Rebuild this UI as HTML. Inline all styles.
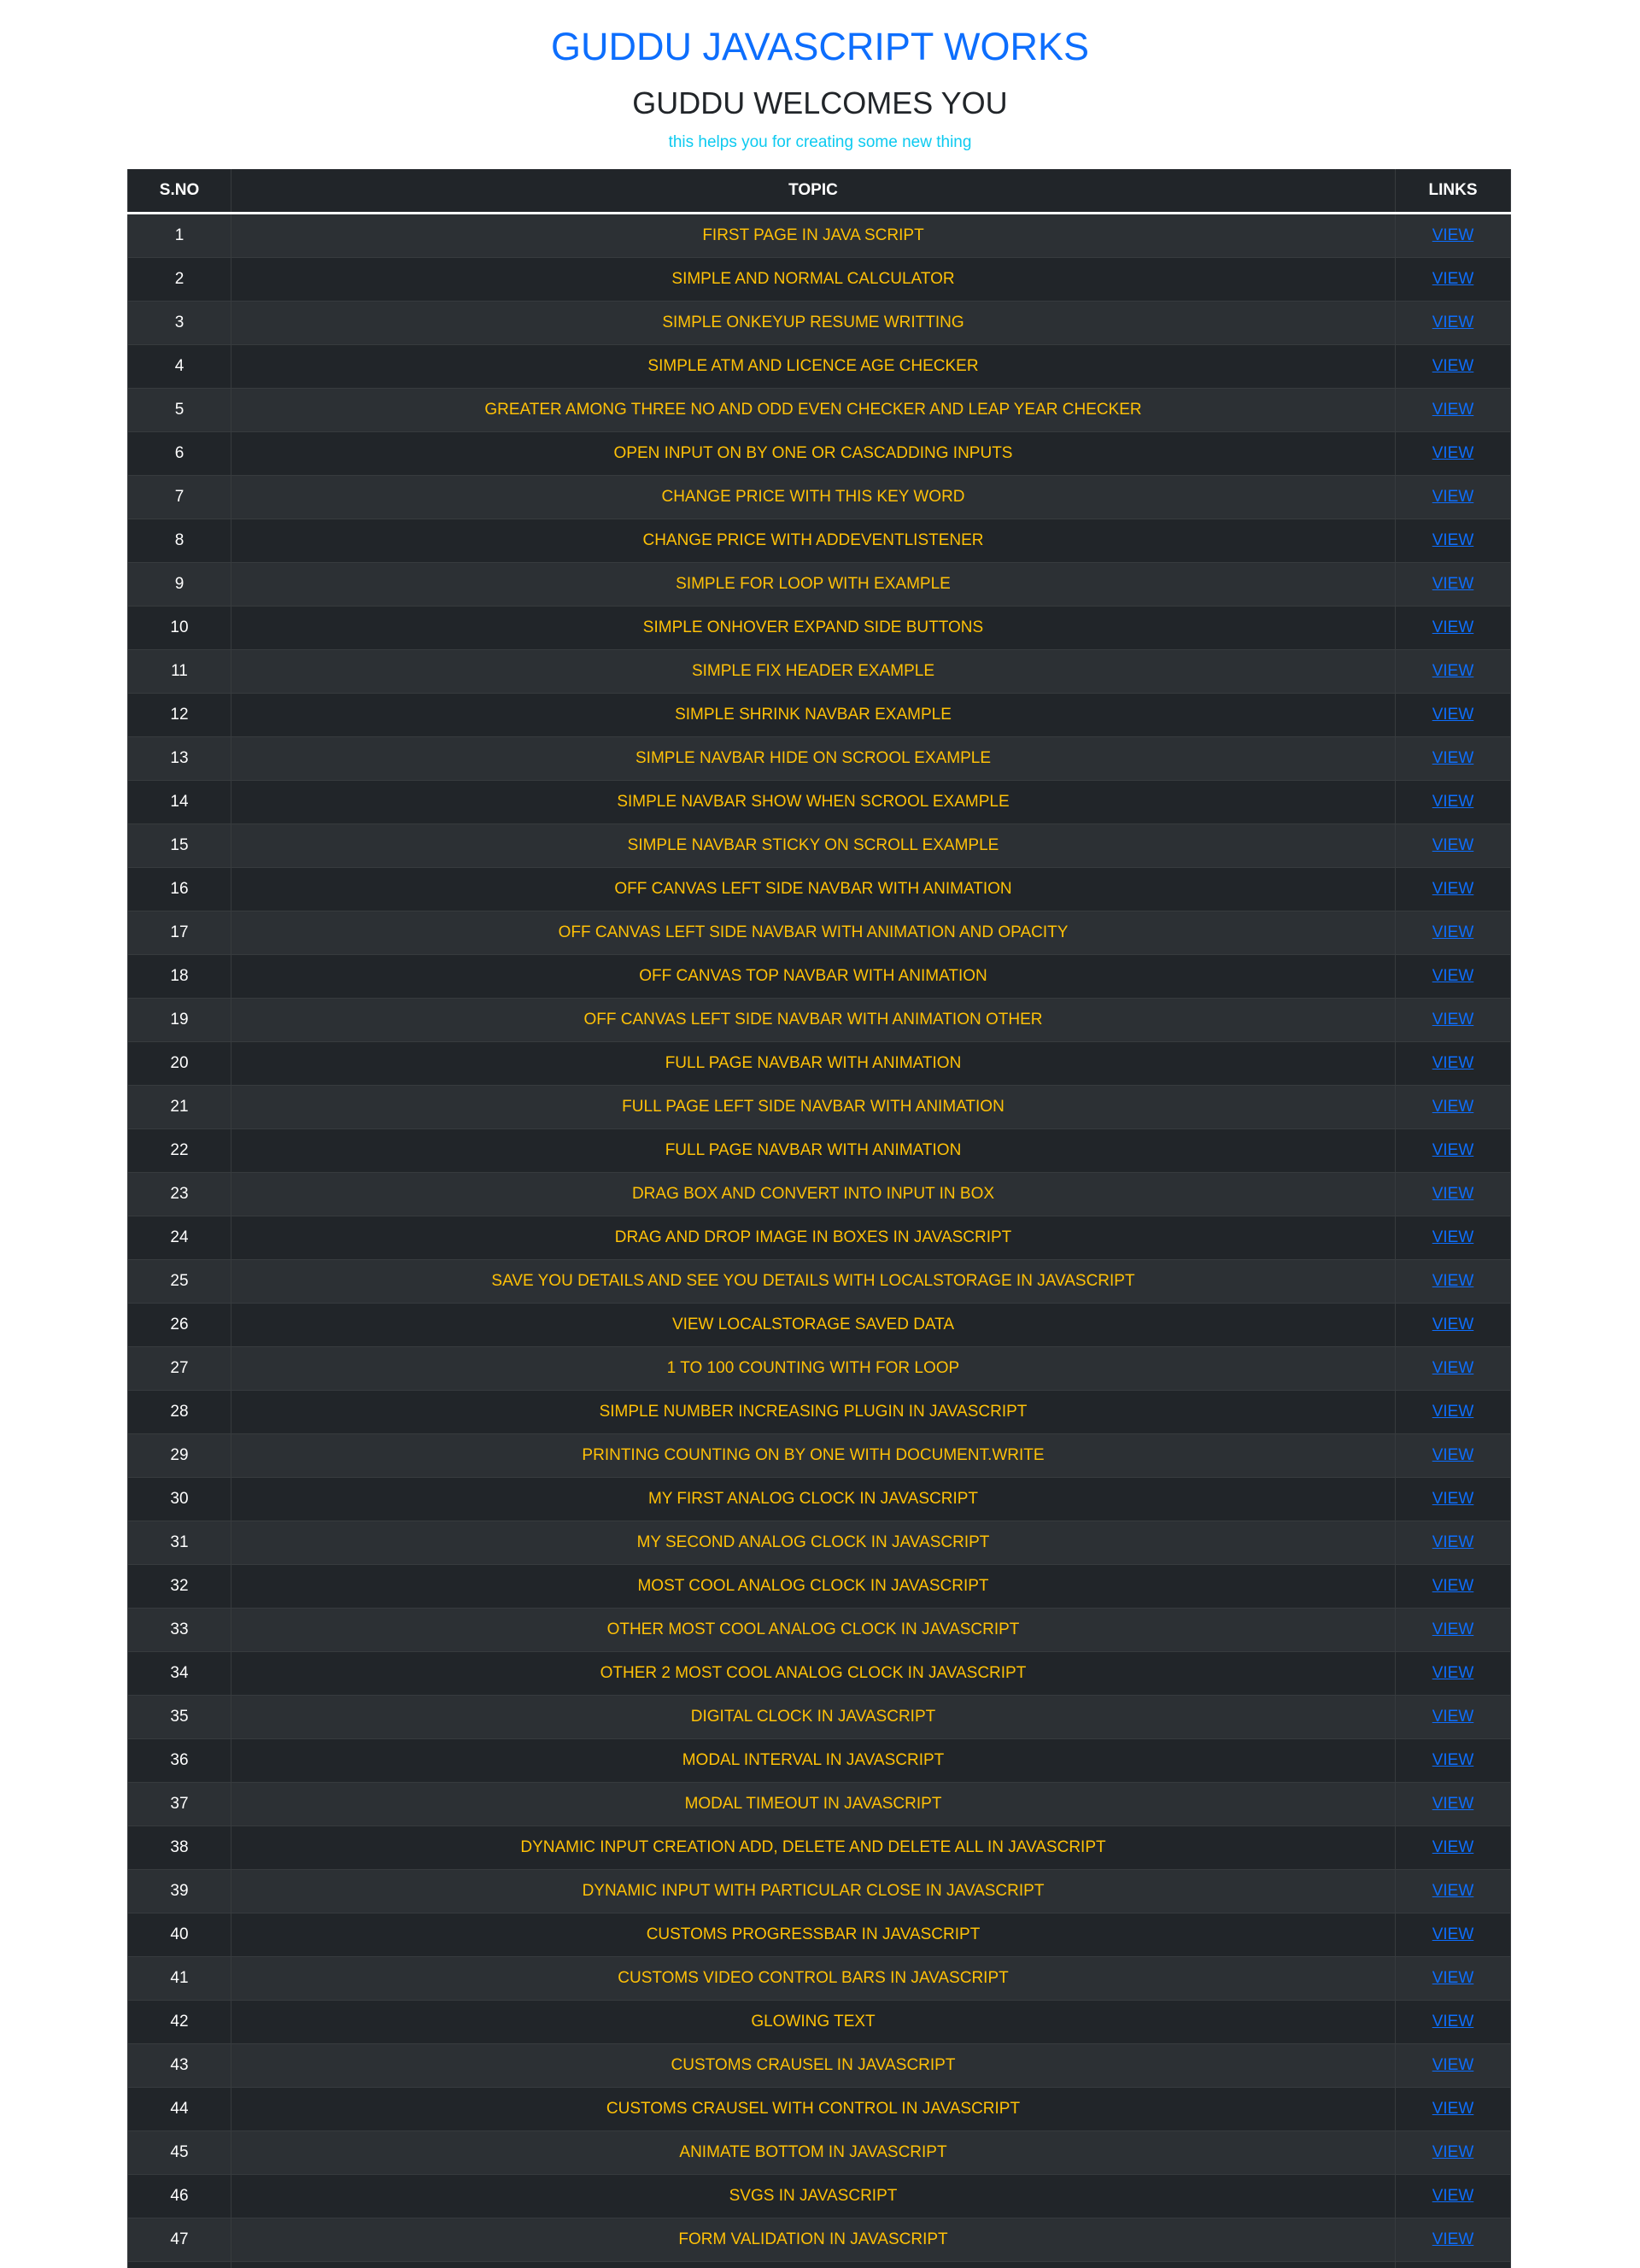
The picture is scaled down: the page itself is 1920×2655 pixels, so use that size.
<!DOCTYPE html>
<html><head><meta charset="utf-8">
<style>
html,body{margin:0;padding:0;background:#fff;width:1920px;height:2655px;overflow:hidden;font-family:"Liberation Sans",sans-serif;}
#wrap{position:relative;width:1920px;height:2655px;overflow:hidden;}
.h1{position:absolute;left:0;width:1920px;top:25px;text-align:center;color:#0d6efd;font-size:45px;line-height:60px;}
.h2{position:absolute;left:0;width:1920px;top:98px;text-align:center;color:#212529;font-size:36px;line-height:46px;}
.sub{position:absolute;left:0;width:1920px;top:155px;text-align:center;color:#0dcaf0;font-size:19px;line-height:24px;}
.t{position:absolute;left:149px;top:198px;width:1620px;font-size:19px;}
.r{display:flex;height:50px;border-bottom:1px solid #373b3e;line-height:50px;text-align:center;}
.r>div{box-sizing:border-box;}
.c1{width:121px;border-left:1px solid #373b3e;color:#fff;}
.c2{width:1363px;border-left:1px solid #373b3e;color:#ffc107;}
.c3{width:136px;border-left:1px solid #373b3e;border-right:1px solid #373b3e;}
.hd{background:#212529;color:#fff;font-weight:bold;border-bottom:3px solid #fff;height:50px;}
.hd .c2{color:#fff;}
.r:nth-child(even){background:#2c3034;}
.r:nth-child(odd){background:#212529;}
a{color:#0d6efd;text-decoration:underline;}
</style></head><body><div id="wrap">
<div class="h1">GUDDU JAVASCRIPT WORKS</div>
<div class="h2">GUDDU WELCOMES YOU</div>
<div class="sub">this helps you for creating some new thing</div>
<div class="t">
<div class="r hd"><div class="c1">S.NO</div><div class="c2">TOPIC</div><div class="c3">LINKS</div></div>
<div class="r"><div class="c1">1</div><div class="c2">FIRST PAGE IN JAVA SCRIPT</div><div class="c3"><a>VIEW</a></div></div>
<div class="r"><div class="c1">2</div><div class="c2">SIMPLE AND NORMAL CALCULATOR</div><div class="c3"><a>VIEW</a></div></div>
<div class="r"><div class="c1">3</div><div class="c2">SIMPLE ONKEYUP RESUME WRITTING</div><div class="c3"><a>VIEW</a></div></div>
<div class="r"><div class="c1">4</div><div class="c2">SIMPLE ATM AND LICENCE AGE CHECKER</div><div class="c3"><a>VIEW</a></div></div>
<div class="r"><div class="c1">5</div><div class="c2">GREATER AMONG THREE NO AND ODD EVEN CHECKER AND LEAP YEAR CHECKER</div><div class="c3"><a>VIEW</a></div></div>
<div class="r"><div class="c1">6</div><div class="c2">OPEN INPUT ON BY ONE OR CASCADDING INPUTS</div><div class="c3"><a>VIEW</a></div></div>
<div class="r"><div class="c1">7</div><div class="c2">CHANGE PRICE WITH THIS KEY WORD</div><div class="c3"><a>VIEW</a></div></div>
<div class="r"><div class="c1">8</div><div class="c2">CHANGE PRICE WITH ADDEVENTLISTENER</div><div class="c3"><a>VIEW</a></div></div>
<div class="r"><div class="c1">9</div><div class="c2">SIMPLE FOR LOOP WITH EXAMPLE</div><div class="c3"><a>VIEW</a></div></div>
<div class="r"><div class="c1">10</div><div class="c2">SIMPLE ONHOVER EXPAND SIDE BUTTONS</div><div class="c3"><a>VIEW</a></div></div>
<div class="r"><div class="c1">11</div><div class="c2">SIMPLE FIX HEADER EXAMPLE</div><div class="c3"><a>VIEW</a></div></div>
<div class="r"><div class="c1">12</div><div class="c2">SIMPLE SHRINK NAVBAR EXAMPLE</div><div class="c3"><a>VIEW</a></div></div>
<div class="r"><div class="c1">13</div><div class="c2">SIMPLE NAVBAR HIDE ON SCROOL EXAMPLE</div><div class="c3"><a>VIEW</a></div></div>
<div class="r"><div class="c1">14</div><div class="c2">SIMPLE NAVBAR SHOW WHEN SCROOL EXAMPLE</div><div class="c3"><a>VIEW</a></div></div>
<div class="r"><div class="c1">15</div><div class="c2">SIMPLE NAVBAR STICKY ON SCROLL EXAMPLE</div><div class="c3"><a>VIEW</a></div></div>
<div class="r"><div class="c1">16</div><div class="c2">OFF CANVAS LEFT SIDE NAVBAR WITH ANIMATION</div><div class="c3"><a>VIEW</a></div></div>
<div class="r"><div class="c1">17</div><div class="c2">OFF CANVAS LEFT SIDE NAVBAR WITH ANIMATION AND OPACITY</div><div class="c3"><a>VIEW</a></div></div>
<div class="r"><div class="c1">18</div><div class="c2">OFF CANVAS TOP NAVBAR WITH ANIMATION</div><div class="c3"><a>VIEW</a></div></div>
<div class="r"><div class="c1">19</div><div class="c2">OFF CANVAS LEFT SIDE NAVBAR WITH ANIMATION OTHER</div><div class="c3"><a>VIEW</a></div></div>
<div class="r"><div class="c1">20</div><div class="c2">FULL PAGE NAVBAR WITH ANIMATION</div><div class="c3"><a>VIEW</a></div></div>
<div class="r"><div class="c1">21</div><div class="c2">FULL PAGE LEFT SIDE NAVBAR WITH ANIMATION</div><div class="c3"><a>VIEW</a></div></div>
<div class="r"><div class="c1">22</div><div class="c2">FULL PAGE NAVBAR WITH ANIMATION</div><div class="c3"><a>VIEW</a></div></div>
<div class="r"><div class="c1">23</div><div class="c2">DRAG BOX AND CONVERT INTO INPUT IN BOX</div><div class="c3"><a>VIEW</a></div></div>
<div class="r"><div class="c1">24</div><div class="c2">DRAG AND DROP IMAGE IN BOXES IN JAVASCRIPT</div><div class="c3"><a>VIEW</a></div></div>
<div class="r"><div class="c1">25</div><div class="c2">SAVE YOU DETAILS AND SEE YOU DETAILS WITH LOCALSTORAGE IN JAVASCRIPT</div><div class="c3"><a>VIEW</a></div></div>
<div class="r"><div class="c1">26</div><div class="c2">VIEW LOCALSTORAGE SAVED DATA</div><div class="c3"><a>VIEW</a></div></div>
<div class="r"><div class="c1">27</div><div class="c2">1 TO 100 COUNTING WITH FOR LOOP</div><div class="c3"><a>VIEW</a></div></div>
<div class="r"><div class="c1">28</div><div class="c2">SIMPLE NUMBER INCREASING PLUGIN IN JAVASCRIPT</div><div class="c3"><a>VIEW</a></div></div>
<div class="r"><div class="c1">29</div><div class="c2">PRINTING COUNTING ON BY ONE WITH DOCUMENT.WRITE</div><div class="c3"><a>VIEW</a></div></div>
<div class="r"><div class="c1">30</div><div class="c2">MY FIRST ANALOG CLOCK IN JAVASCRIPT</div><div class="c3"><a>VIEW</a></div></div>
<div class="r"><div class="c1">31</div><div class="c2">MY SECOND ANALOG CLOCK IN JAVASCRIPT</div><div class="c3"><a>VIEW</a></div></div>
<div class="r"><div class="c1">32</div><div class="c2">MOST COOL ANALOG CLOCK IN JAVASCRIPT</div><div class="c3"><a>VIEW</a></div></div>
<div class="r"><div class="c1">33</div><div class="c2">OTHER MOST COOL ANALOG CLOCK IN JAVASCRIPT</div><div class="c3"><a>VIEW</a></div></div>
<div class="r"><div class="c1">34</div><div class="c2">OTHER 2 MOST COOL ANALOG CLOCK IN JAVASCRIPT</div><div class="c3"><a>VIEW</a></div></div>
<div class="r"><div class="c1">35</div><div class="c2">DIGITAL CLOCK IN JAVASCRIPT</div><div class="c3"><a>VIEW</a></div></div>
<div class="r"><div class="c1">36</div><div class="c2">MODAL INTERVAL IN JAVASCRIPT</div><div class="c3"><a>VIEW</a></div></div>
<div class="r"><div class="c1">37</div><div class="c2">MODAL TIMEOUT IN JAVASCRIPT</div><div class="c3"><a>VIEW</a></div></div>
<div class="r"><div class="c1">38</div><div class="c2">DYNAMIC INPUT CREATION ADD, DELETE AND DELETE ALL IN JAVASCRIPT</div><div class="c3"><a>VIEW</a></div></div>
<div class="r"><div class="c1">39</div><div class="c2">DYNAMIC INPUT WITH PARTICULAR CLOSE IN JAVASCRIPT</div><div class="c3"><a>VIEW</a></div></div>
<div class="r"><div class="c1">40</div><div class="c2">CUSTOMS PROGRESSBAR IN JAVASCRIPT</div><div class="c3"><a>VIEW</a></div></div>
<div class="r"><div class="c1">41</div><div class="c2">CUSTOMS VIDEO CONTROL BARS IN JAVASCRIPT</div><div class="c3"><a>VIEW</a></div></div>
<div class="r"><div class="c1">42</div><div class="c2">GLOWING TEXT</div><div class="c3"><a>VIEW</a></div></div>
<div class="r"><div class="c1">43</div><div class="c2">CUSTOMS CRAUSEL IN JAVASCRIPT</div><div class="c3"><a>VIEW</a></div></div>
<div class="r"><div class="c1">44</div><div class="c2">CUSTOMS CRAUSEL WITH CONTROL IN JAVASCRIPT</div><div class="c3"><a>VIEW</a></div></div>
<div class="r"><div class="c1">45</div><div class="c2">ANIMATE BOTTOM IN JAVASCRIPT</div><div class="c3"><a>VIEW</a></div></div>
<div class="r"><div class="c1">46</div><div class="c2">SVGS IN JAVASCRIPT</div><div class="c3"><a>VIEW</a></div></div>
<div class="r"><div class="c1">47</div><div class="c2">FORM VALIDATION IN JAVASCRIPT</div><div class="c3"><a>VIEW</a></div></div>
<div class="r"><div class="c1">48</div><div class="c2">&nbsp;</div><div class="c3"><a>VIEW</a></div></div>
</div>
</div></body></html>
